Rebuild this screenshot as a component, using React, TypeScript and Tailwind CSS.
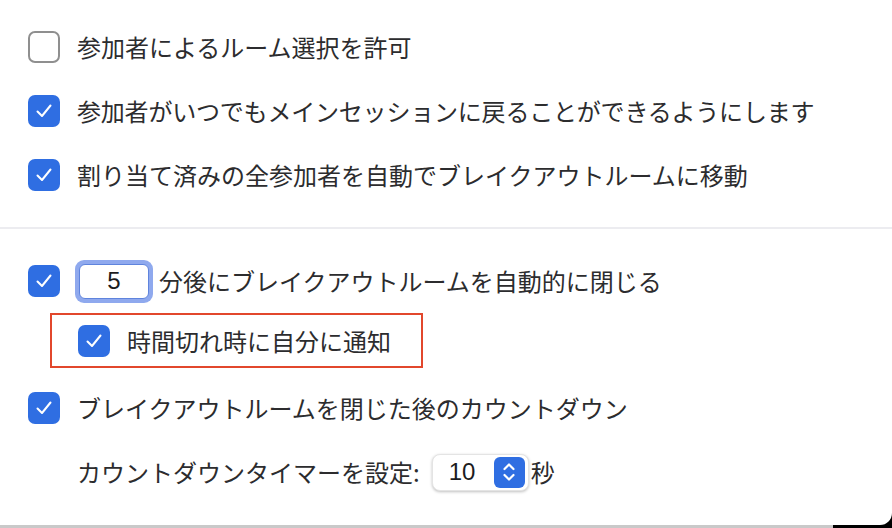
import React from 'react'

const jp = { fontFamily: '"Noto Sans CJK JP", "Noto Sans", sans-serif' }

function Box({ checked }: { checked: boolean }) {
  if (!checked) {
    return <div className="shrink-0 w-[32px] h-[32px] rounded-[7px] border-2 border-[#8f8f8f] bg-white" />
  }
  return (
    <div className="shrink-0 w-[32px] h-[32px] rounded-[7px] bg-[#2f6ee2] flex items-center justify-center">
      <svg width="20" height="20" viewBox="0 0 20 20" fill="none">
        <path d="M3.5 10.5 L8 15 L16.5 4.5" stroke="white" strokeWidth="2" strokeLinecap="round" strokeLinejoin="round" />
      </svg>
    </div>
  )
}

function Row({ checked, children, className = '' }: { checked: boolean; children: React.ReactNode; className?: string }) {
  return (
    <div className={`flex items-center h-[64px] ${className}`}>
      <Box checked={checked} />
      {children}
    </div>
  )
}

export default function App() {
  return (
    <div className="w-[892px] h-[528px] flex flex-col bg-[linear-gradient(to_right,#c9c9c9_833px,#000_833px)]" style={jp}>
      <div className="h-[525px] bg-white rounded-br-[12px] text-[#2c2c2e] text-[24px] flex flex-col">
        <div className="pl-[28px] pt-[15px] pb-[20px] flex flex-col">
          <Row checked={false}>
            <span className="ml-[17px]">参加者によるルーム選択を許可</span>
          </Row>
          <Row checked>
            <span className="ml-[17px] tracking-[-0.2px]">参加者がいつでもメインセッションに戻ることができるようにします</span>
          </Row>
          <Row checked>
            <span className="ml-[17px]">割り当て済みの全参加者を自動でブレイクアウトルームに移動</span>
          </Row>
        </div>
        <div className="h-[2px] bg-[#ececf0]" />
        <div className="pl-[28px] pt-[20px] flex flex-col">
          <Row checked>
            <div className="ml-[15px] w-[78px] h-[43px] rounded-[9px] bg-[#8fa9ee] p-[4px]">
              <div
                className="w-full h-full rounded-[6px] bg-white border border-[#5f84dd] flex items-center justify-center text-[24px] text-[#1c1c1e]"
                style={{ fontFamily: '"Liberation Sans", Arial, sans-serif' }}
              >
                5
              </div>
            </div>
            <span className="ml-[6px]">分後にブレイクアウトルームを自動的に閉じる</span>
          </Row>
          <div className="ml-[22px] w-[373px] h-[55px] border-2 border-[#e2472c] flex items-center pl-[26px]">
            <Box checked />
            <span className="ml-[17px]">時間切れ時に自分に通知</span>
          </div>
          <Row checked className="mt-[8px]">
            <span className="ml-[17px]">ブレイクアウトルームを閉じた後のカウントダウン</span>
          </Row>
          <div className="flex items-center h-[64px] pl-[49px]">
            <span>カウントダウンタイマーを設定:</span>
            <div className="ml-[12px] w-[97px] h-[37px] rounded-[8px] bg-white shadow-[0_1px_3px_rgba(0,0,0,0.25)] border border-[#e4e4e4] flex items-center justify-between pl-[16px] pr-[3px]">
              <span className="text-[24px] text-[#1c1c1e]" style={{ fontFamily: '"Liberation Sans", Arial, sans-serif' }}>10</span>
              <div className="w-[31px] h-[31px] rounded-[6px] bg-[#2f6ee2] flex items-center justify-center">
                <svg width="16" height="24" viewBox="0 0 16 24" fill="none">
                  <path d="M3.5 9 L8 4.5 L12.5 9" stroke="white" strokeWidth="2.2" strokeLinecap="round" strokeLinejoin="round" />
                  <path d="M3.5 15 L8 19.5 L12.5 15" stroke="white" strokeWidth="2.2" strokeLinecap="round" strokeLinejoin="round" />
                </svg>
              </div>
            </div>
            <span className="ml-[2px]">秒</span>
          </div>
        </div>
      </div>
    </div>
  )
}
